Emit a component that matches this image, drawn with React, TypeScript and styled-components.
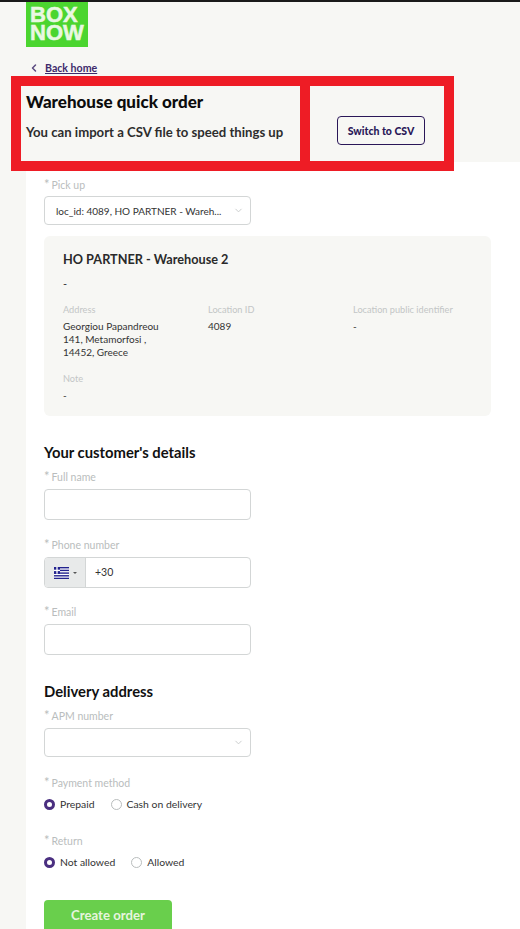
import React from 'react'
import styled, { createGlobalStyle } from 'styled-components'
import { FiChevronDown, FiChevronLeft } from 'react-icons/fi'

const Global = createGlobalStyle`
  html, body {
    margin: 0;
    padding: 0;
    background: #f7f7f4;
  }
  * {
    box-sizing: border-box;
  }
`

const Flag = () => (
  <svg width="15" height="12" viewBox="0 0 16 12" preserveAspectRatio="none">
    <rect width="16" height="12" fill="#fff" />
    <rect y="0" width="16" height="1.4" fill="#23238e" />
    <rect y="2.7" width="16" height="1.4" fill="#23238e" />
    <rect y="5.4" width="16" height="1.4" fill="#23238e" />
    <rect y="8.1" width="16" height="1.4" fill="#23238e" />
    <rect y="10.7" width="16" height="1.3" fill="#23238e" />
    <rect width="6.4" height="6.8" fill="#23238e" />
    <rect x="2.5" width="1.4" height="6.8" fill="#fff" />
    <rect y="2.7" width="6.4" height="1.4" fill="#fff" />
  </svg>
)

const App = () => {
  return (
    <Page>
      <Global />
      <TopLine />
      <Header>
        <Logo>
          BOX
          <br />
          NOW
        </Logo>
        <BackRow>
          <FiChevronLeft />
          <BackLink href="#">Back home</BackLink>
        </BackRow>
        <TitleRow>
          <div>
            <Title>Warehouse quick order</Title>
            <Subtitle>You can import a CSV file to speed things up</Subtitle>
          </div>
          <CsvButton>Switch to CSV</CsvButton>
        </TitleRow>
        <Annotation $left={11} $width={299} />
        <Annotation $left={300} $width={154} />
      </Header>
      <Main>
        <Label>Pick up</Label>
        <Select $top={4}>
          <span>loc_id: 4089, HO PARTNER - Wareh...</span>
          <FiChevronDown />
        </Select>
        <Card>
          <CardTitle>HO PARTNER - Warehouse 2</CardTitle>
          <CardDash>-</CardDash>
          <InfoGrid>
            <div>
              <InfoLabel>Address</InfoLabel>
              <InfoValue>
                Georgiou Papandreou
                <br />
                141, Metamorfosi ,
                <br />
                14452, Greece
              </InfoValue>
            </div>
            <div>
              <InfoLabel>Location ID</InfoLabel>
              <InfoValue>4089</InfoValue>
            </div>
            <div>
              <InfoLabel>Location public identifier</InfoLabel>
              <InfoValue>-</InfoValue>
            </div>
          </InfoGrid>
          <NoteBlock>
            <InfoLabel>Note</InfoLabel>
            <InfoValue>-</InfoValue>
          </NoteBlock>
        </Card>

        <SectionTitle>Your customer's details</SectionTitle>
        <Label>Full name</Label>
        <Input />
        <Label $top={18}>Phone number</Label>
        <PhoneBox>
          <FlagPart>
            <Flag />
            <Caret />
          </FlagPart>
          <PhoneValue>+30</PhoneValue>
        </PhoneBox>
        <Label $top={17}>Email</Label>
        <Input />

        <SectionTitle>Delivery address</SectionTitle>
        <Label>APM number</Label>
        <Select $top={5}>
          <span />
          <FiChevronDown />
        </Select>
        <Label $top={19}>Payment method</Label>
        <RadioRow>
          <RadioItem>
            <Radio $on />
            Prepaid
          </RadioItem>
          <RadioItem>
            <Radio />
            Cash on delivery
          </RadioItem>
        </RadioRow>
        <Label $top={23}>Return</Label>
        <RadioRow>
          <RadioItem>
            <Radio $on />
            Not allowed
          </RadioItem>
          <RadioItem>
            <Radio />
            Allowed
          </RadioItem>
        </RadioRow>
        <CreateButton>Create order</CreateButton>
      </Main>
    </Page>
  )
}

export default App

const Page = styled.div`
  position: relative;
  width: 520px;
  height: 929px;
  overflow: hidden;
  font-family: Lato, "Open Sans", sans-serif;
  background: #f7f7f4;
`
const TopLine = styled.div`
  height: 2px;
  background: #1a1a1a;
`
const Header = styled.div`
  position: relative;
  height: 160px;
  padding-left: 26px;
`
const Logo = styled.div`
  width: 62px;
  height: 45px;
  background: #4bd52f;
  color: #e9f7e2;
  font-family: "Liberation Sans", sans-serif;
  font-weight: 700;
  font-size: 22px;
  line-height: 18px;
  -webkit-text-stroke: 0.5px #e9f7e2;
  padding: 4px 0 0 4px;
`
const BackRow = styled.div`
  display: flex;
  align-items: center;
  gap: 5px;
  margin-top: 13px;
  padding-left: 2px;
  height: 15px;
  color: #5b4a80;
  svg {
    font-size: 12px;
    stroke-width: 3;
  }
`
const BackLink = styled.a`
  color: #3d2a6b;
  font-weight: 700;
  font-size: 10.6px;
`
const TitleRow = styled.div`
  display: flex;
  margin-top: 17px;
  width: 399px;
  align-items: flex-start;
  justify-content: space-between;
`
const Title = styled.h1`
  margin: 0;
  font-size: 17px;
  line-height: 20px;
  font-weight: 900;
  color: #0c0c0c;
`
const Subtitle = styled.p`
  margin: 11px 0 0;
  font-size: 13.15px;
  line-height: 18px;
  font-weight: 700;
  color: #2d2d2d;
`
const CsvButton = styled.button`
  margin-top: 24px;
  width: 88px;
  height: 29px;
  border: 1px solid #2a1758;
  border-radius: 4px;
  background: transparent;
  color: #2a1758;
  font-family: inherit;
  font-size: 10.5px;
  font-weight: 900;
  padding: 0;
`
const Annotation = styled.div<{ $left: number; $width: number }>`
  position: absolute;
  top: 74px;
  left: ${p => p.$left}px;
  width: ${p => p.$width}px;
  height: 95px;
  border: 10px solid #ee1c25;
`
const Main = styled.div`
  margin-left: 26px;
  height: 767px;
  background: #fff;
  padding: 16px 0 0 18px;
`
const Label = styled.div<{ $top?: number }>`
  margin-top: ${p => p.$top ?? 0}px;
  height: 14px;
  font-size: 10.5px;
  line-height: 15px;
  color: #b9bdbd;
  &::before {
    content: '*';
    font-size: 13px;
    line-height: 0;
    margin: 0 2px 0 0;
  }
`
const Select = styled.div<{ $top: number }>`
  margin-top: ${p => p.$top}px;
  width: 207px;
  height: 29px;
  border: 1px solid #d3d6d6;
  border-radius: 4px;
  display: flex;
  align-items: center;
  justify-content: space-between;
  padding: 0 6px 0 11px;
  font-size: 10px;
  color: #333;
  svg {
    color: #c6c9c9;
    font-size: 11px;
  }
`
const Card = styled.div`
  margin-top: 11px;
  width: 447px;
  height: 180px;
  background: #f7f7f4;
  border-radius: 6px;
  padding: 15px 19px;
`
const CardTitle = styled.div`
  font-size: 12.7px;
  line-height: 16px;
  font-weight: 700;
  color: #2a2a2a;
`
const CardDash = styled.div`
  margin-top: 10px;
  font-size: 11px;
  line-height: 14px;
  color: #333;
`
const InfoGrid = styled.div`
  margin-top: 12px;
  display: grid;
  grid-template-columns: 145px 145px 1fr;
`
const InfoLabel = styled.div`
  font-size: 9.2px;
  line-height: 14px;
  color: #c3c6c6;
`
const InfoValue = styled.div`
  margin-top: 3px;
  font-size: 10px;
  line-height: 13px;
  color: #333;
`
const NoteBlock = styled.div`
  margin-top: 13px;
`
const SectionTitle = styled.h2`
  margin: 27px 0 9px;
  font-size: 14.8px;
  line-height: 18px;
  font-weight: 700;
  color: #111;
`
const Input = styled.div`
  margin-top: 5px;
  width: 207px;
  height: 31px;
  border: 1px solid #d3d6d6;
  border-radius: 4px;
  background: #fff;
`
const PhoneBox = styled(Input)`
  display: flex;
  overflow: hidden;
`
const FlagPart = styled.div`
  width: 41px;
  background: #e8eaea;
  border-right: 1px solid #d3d6d6;
  display: flex;
  align-items: center;
  padding-left: 9px;
  gap: 4px;
`
const Caret = styled.span`
  width: 0;
  height: 0;
  border-left: 2px solid transparent;
  border-right: 2px solid transparent;
  border-top: 2px solid #555;
`
const PhoneValue = styled.div`
  padding-left: 9px;
  font-size: 10.5px;
  line-height: 29px;
  color: #333;
`
const RadioRow = styled.div`
  margin-top: 7px;
  display: flex;
  gap: 16px;
  height: 14px;
`
const RadioItem = styled.label`
  display: flex;
  align-items: center;
  gap: 5px;
  font-size: 10.4px;
  color: #333;
`
const Radio = styled.span<{ $on?: boolean }>`
  width: 11px;
  height: 11px;
  border-radius: 50%;
  background: #fff;
  border: ${p => (p.$on ? '3px solid #4a2f80' : '1px solid #b9bdbd')};
`
const CreateButton = styled.button`
  display: block;
  margin-top: 31px;
  width: 128px;
  height: 30px;
  border: 0;
  border-radius: 4px 4px 0 0;
  background: #69cf4c;
  color: #e6f5de;
  font-family: inherit;
  font-size: 13.2px;
  font-weight: 700;
  padding: 0;
`
